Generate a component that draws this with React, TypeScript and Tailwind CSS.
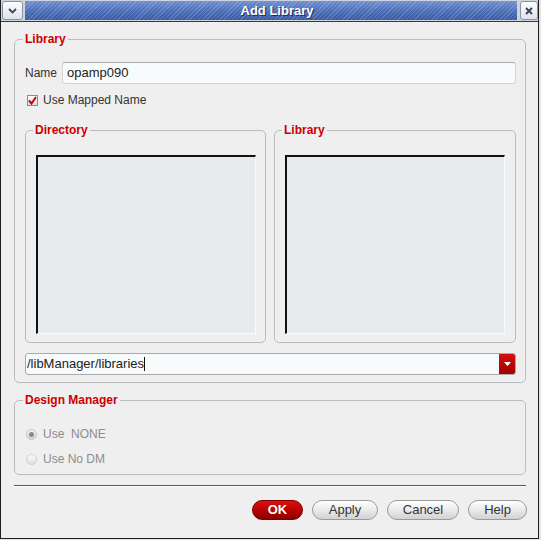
import React from "react";

function Legend({ children, ml }: { children: React.ReactNode; ml: string }) {
  return (
    <legend className={`${ml} px-[2px] text-[12px] leading-[14px] font-bold text-[#cc0000]`}>
      {children}
    </legend>
  );
}

function ListBox() {
  return (
    <div className="h-[179px] bg-[#e7ebee] border-t-2 border-l-2 border-t-[#111] border-l-[#111] border-r border-b border-r-[#fafafa] border-b-[#fafafa]" />
  );
}

function Btn({ label, w, primary }: { label: string; w: string; primary?: boolean }) {
  if (primary) {
    return (
      <div
        className={`${w} h-[20px] rounded-full flex items-center justify-center text-white font-bold text-[13px] bg-[linear-gradient(#e01010,#b00000_60%,#8a0000)] border border-[#7a0000]`}
      >
        {label}
      </div>
    );
  }
  return (
    <div
      className={`${w} h-[20px] rounded-full flex items-center justify-center text-[#333] text-[13px] bg-[linear-gradient(#ffffff,#ececec_45%,#d2d2d2)] border border-[#9a9a9a]`}
    >
      {label}
    </div>
  );
}

export default function App() {
  return (
    <div className="w-[541px] h-[540px] bg-[#e4e4e4] font-['Liberation_Sans',Arial,sans-serif] text-[12px] text-[#333]">
      <div className="w-[539px] h-[539px] flex flex-col border-l border-r border-b border-[#1e1e1e] bg-[#efefef]">
        {/* title bar */}
        <div className="h-[22px] flex items-stretch gap-[2px] pt-[1px] pb-[1px] pl-[1px] bg-[#cfd4dc] border-b border-[#2b3b5c]">
          <div className="w-[21px] rounded-[3px] border border-[#8a93a3] bg-[linear-gradient(#fdfdfd,#dfe3ea)] flex items-center justify-center">
            <svg width="9" height="6" viewBox="0 0 9 6">
              <path d="M1 1 L4.5 4.5 L8 1" stroke="#3b4660" strokeWidth="1.8" fill="none" />
            </svg>
          </div>
          <div className="flex-1 flex items-center justify-center pl-[12px] bg-[repeating-linear-gradient(-45deg,rgba(255,255,255,0.16)_0px,rgba(255,255,255,0.16)_1px,transparent_1px,transparent_3px),linear-gradient(#6f8fd2,#4a6cb6_55%,#3a5aa2)]">
            <span className="text-white font-bold text-[13px] [text-shadow:1px_1px_0_#1e2f5a]">Add Library</span>
          </div>
          <div className="w-[18px] rounded-[3px] border border-[#8a93a3] bg-[linear-gradient(#fdfdfd,#dfe3ea)] flex items-center justify-center ml-[1px]">
            <svg width="8" height="8" viewBox="0 0 8 8">
              <path d="M1 1 L7 7 M7 1 L1 7" stroke="#3b4660" strokeWidth="2" />
            </svg>
          </div>
        </div>

        {/* body */}
        <div className="flex-1 flex flex-col pl-[13px] pr-[12px] pt-[10px]">
          {/* Library group */}
          <fieldset className="border border-[#bcbcbc] rounded-[5px] pt-[16px] pb-[7px] pl-[10px] pr-[9px]">
            <Legend ml="ml-[-2px]">Library</Legend>
            <div className="flex items-center">
              <span className="w-[37px]">Name</span>
              <div className="flex-1 h-[22px] rounded-[3px] bg-[#f8fbfb] border border-[#d4d4d4] border-t-[#a9a9a9] flex items-center pl-[4px] text-[#222] text-[13px]">
                opamp090
              </div>
            </div>
            <div className="flex items-center mt-[9px] h-[14px]">
              <div className="ml-[2px] w-[11px] h-[11px] border border-[#8c8c8c] bg-[linear-gradient(#ffffff,#dcdcdc)] flex items-center justify-center">
                <svg width="9" height="9" viewBox="0 0 9 9">
                  <path d="M1 4.5 L3.5 7.5 L8 1" stroke="#cc0000" strokeWidth="2" fill="none" />
                </svg>
              </div>
              <span className="ml-[5px] text-[12px]">Use Mapped Name</span>
            </div>

            <div className="flex gap-[8px] mt-[16px]">
              <fieldset className="flex-1 border border-[#bcbcbc] rounded-[5px] pt-[18px] pb-[8px] pl-[10px] pr-[9px]">
                <Legend ml="ml-[-3px]">Directory</Legend>
                <ListBox />
              </fieldset>
              <fieldset className="flex-1 border border-[#bcbcbc] rounded-[5px] pt-[18px] pb-[8px] pl-[10px] pr-[10px]">
                <Legend ml="ml-[-3px]">Library</Legend>
                <ListBox />
              </fieldset>
            </div>

            <div className="mt-[10px] h-[22px] flex rounded-[3px] border border-[#a9a9a9] bg-[#f7fbfb] overflow-hidden">
              <div className="flex-1 flex items-center pl-[1px] text-[13px] text-[#222]">
                /libManager/libraries<span className="inline-block w-[1px] h-[14px] bg-[#111]" />
              </div>
              <div className="w-[16px] bg-[linear-gradient(#d41010,#a00000)] flex items-center justify-center">
                <svg width="7" height="4" viewBox="0 0 7 4">
                  <path d="M0 0 L7 0 L3.5 4 Z" fill="#ffffff" />
                </svg>
              </div>
            </div>
          </fieldset>

          {/* Design Manager */}
          <fieldset className="mt-[10px] border border-[#bcbcbc] rounded-[5px] pt-[20px] pb-[8px] pl-[11px] pr-[10px]">
            <Legend ml="ml-[-3px]">Design Manager</Legend>
            <div className="flex items-center h-[14px]">
              <div className="w-[11px] h-[11px] rounded-full border border-[#c4c4c4] bg-[linear-gradient(#f4f4f4,#d4d4d4)] flex items-center justify-center">
                <div className="w-[5px] h-[5px] rounded-full bg-[#8a8a8a]" />
              </div>
              <span className="ml-[6px] text-[#8c8c8c] whitespace-pre">Use  NONE</span>
            </div>
            <div className="flex items-center h-[14px] mt-[11px]">
              <div className="w-[11px] h-[11px] rounded-full border border-[#d0d0d0] bg-[linear-gradient(#fbfbfb,#dedede)]" />
              <span className="ml-[6px] text-[#8c8c8c]">Use No DM</span>
            </div>
          </fieldset>

          {/* separator */}
          <div className="mt-[10px] h-[1px] bg-[#5a5a5a]" />
          <div className="h-[1px] bg-[#fafafa]" />

          {/* buttons */}
          <div className="mt-[13px] flex justify-end gap-[9px] mr-[-1px]">
            <Btn label="OK" w="w-[51px]" primary />
            <Btn label="Apply" w="w-[66px]" />
            <Btn label="Cancel" w="w-[72px]" />
            <Btn label="Help" w="w-[59px]" />
          </div>
        </div>
      </div>
    </div>
  );
}
